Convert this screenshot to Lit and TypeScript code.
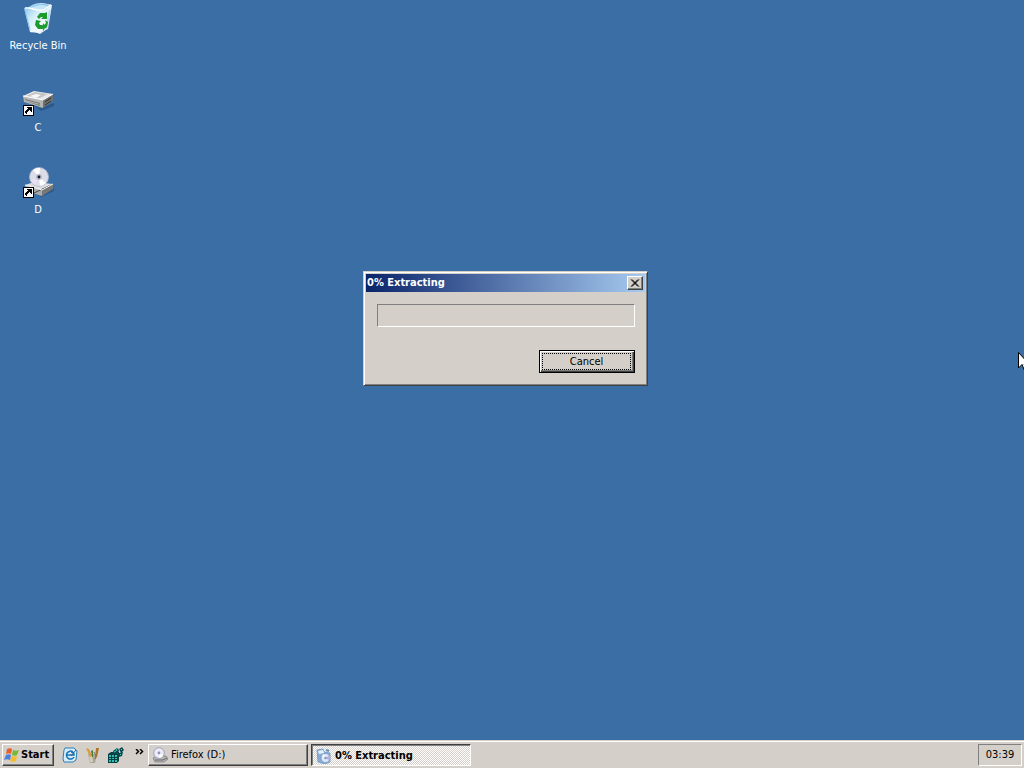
import { LitElement, html, css, svg } from "lit";
import { customElement, property } from "lit/decorators.js";

const shortcutArrow = svg`
  <g shape-rendering="crispEdges">
    <rect x="1" y="21" width="11" height="11" fill="#000"/>
    <rect x="2" y="22" width="9" height="9" fill="#fff"/>
    <path d="M5 23h5v5H9v-1H8v-1H7v1H6v1H5v2H4v-1H3v-2h1v-1h1v-1h1v-1H5z" fill="#000"/>
  </g>`;

const recycleBin = html`
  <svg width="32" height="32" viewBox="0 0 32 32" aria-hidden="true">
    <defs>
      <linearGradient id="bin" x1="0" y1="0" x2="1" y2="1">
        <stop offset="0" stop-color="#7cc0ea"/><stop offset=".4" stop-color="#d5effb"/>
        <stop offset=".7" stop-color="#f6fbfe"/><stop offset="1" stop-color="#a9cfea"/>
      </linearGradient>
    </defs>
    <path d="M2 6c6 0 8-5 17-5 4 0 7 1 11 2l-4 24c-3 1-5 3-8 5-3-2-7-1-10-2z" fill="url(#bin)"/>
    <path d="M4 6c6 0 8-4 15-4 4 0 7 0 10 1-3 2-4 5-9 5-6 0-9-3-16-2z" fill="#8cc6ea"/>
    <path d="M7 6c5-1 8-3 13-3l6 1c-3 3-9 4-12 3z" fill="#c3e6f8"/>
    <path d="M3 6c6-1 10 3 16 2 5 0 7-4 10-5" fill="none" stroke="#fff" stroke-width="1.500"/>
    <path d="M3 8l5 20" fill="none" stroke="#8cc3e6"/>
    <path d="M28 8l-4 19" fill="none" stroke="#b6daf0" stroke-width="2"/>
    <path d="M15 15l3-4h5l2-1v7h-6l2-2h-2l-2 2zM14 18l5 1-2 2 1 2h2v4h-4l-3-4zM23 18l3 2-1 5-3 2v2l-3-4 3-4v2l2-2z" fill="#1c9a2c"/>
  </svg>`;

const hardDrive = html`
  <svg width="32" height="32" viewBox="0 0 32 32" aria-hidden="true">
    <path d="M5 16l13 8 14-5v3l-13 5z" fill="#234b78" opacity=".6"/>
    <path d="M1 12L12 7l19 3-10 6z" fill="#e9e9e9"/>
    <path d="M4 12l9-4 13 2-8 4z" fill="#c4c6c6"/>
    <path d="M8 12l6-2 5 1-5 3z" fill="#f8f8f8"/>
    <path d="M1 12l20 4v8L2 18z" fill="#b4b4b4"/>
    <path d="M21 16l10-6v7l-10 7z" fill="#6f6f6f"/>
    <path d="M3 15l15 4v1L3 16zM3 17l15 4v1" fill="#777"/>
    <path d="M1 12l20 4 10-6" fill="none" stroke="#fff"/>
    <path d="M23 18l6-4M23 21l6-4" stroke="#333"/>
    <path d="M16 20h2" stroke="#4a4"/>
    ${shortcutArrow}
  </svg>`;

const discDrive = html`
  <svg width="32" height="32" viewBox="0 0 32 32" aria-hidden="true">
    <path d="M8 25l10 5 14-8v3l-13 6z" fill="#234b78" opacity=".6"/>
    <path d="M3 19l9-3 19 2-11 6z" fill="#dedede"/>
    <path d="M3 19l17 5v6L4 25z" fill="#aaa"/>
    <path d="M20 24l11-6v5l-11 7z" fill="#777"/>
    <path d="M12 27l17-8" stroke="#444"/>
    <path d="M3 19l17 5 11-6" fill="none" stroke="#f6f6f6"/>
    <circle cx="17" cy="11" r="9.500" fill="#dcdde8" stroke="#aeb6cc" stroke-width=".8"/>
    <path d="M17 11L11 4a9 9 0 0 1 7-2z" fill="#fff"/>
    <path d="M17 11l7 6a9 9 0 0 1-6 3z" fill="#fff"/>
    <path d="M17 11l-8 3a9 9 0 0 0 4 5z" fill="#e9dff2"/>
    <circle cx="17" cy="11" r="3" fill="#b9bac8"/>
    <circle cx="17" cy="11" r="1.400" fill="#151b2c"/>
    ${shortcutArrow}
  </svg>`;

const flag = html`
  <svg width="16" height="16" viewBox="0 0 16 16" aria-hidden="true">
    <path d="M3 2c2-1 4-1 5 0L7 7C5 6 4 6 2 7z" fill="#e8602c"/>
    <path d="M9 3c2 1 4 1 6 0l-2 5c-2 1-3 1-5 0z" fill="#78b833"/>
    <path d="M2 8c2-1 3-1 5 0l-1 5c-2-1-4-1-6 0z" fill="#4b80dc"/>
    <path d="M8 9c2 1 3 1 5 0l-1 5c-2 1-4 1-6 0z" fill="#f5bd27"/>
  </svg>`;

const desktopGlyph = html`
  <svg width="16" height="16" viewBox="0 0 16 16" aria-hidden="true">
    <path d="M3 1h9l3 3-1 9-3 2H2l-1-3 1-9z" fill="#d6edf8" stroke="#2c7fb6"/>
    <path d="M11 5a4 4 0 1 0 1 5M5 8h7c0-2-1-3-3-3" fill="none" stroke="#1673b5" stroke-width="1.500"/>
    <path d="M9 9l5-6" stroke="#3b5f80"/>
  </svg>`;

const toolsGlyph = html`
  <svg width="16" height="16" viewBox="0 0 16 16" aria-hidden="true">
    <path d="M3 7h9l-2 9H5z" fill="#a9a795"/>
    <path d="M4 8h3l1 7H5z" fill="#d3cfba"/>
    <path d="M1 1l3 1 3 7-2 1z" fill="#d89c3c"/>
    <path d="M6 4l2-1v7H7z" fill="#507d43"/>
    <path d="M11 1h3l-2 9-2 2z" fill="#b07627"/>
    <path d="M9 5l2 4-1 3" fill="none" stroke="#77786d"/>
  </svg>`;

const registryGlyph = html`
  <svg width="16" height="16" viewBox="0 0 16 16" aria-hidden="true">
    <path d="M0 7l3-2h8v9l-2 2H0z" fill="#073f43"/>
    <path d="M1 8h2v2H1zM4 8h2v2H4zM7 8h2v2H7zM1 11h2v1H1zM4 11h2v1H4zM7 11h2v1H7zM1 13h2v2H1zM4 13h2v2H4zM7 13h2v2H7z" fill="#2fc0b4"/>
    <path d="M5 4l4-3 2 2-1 4-4 0zM11 2l3-2 2 3-3 3zM11 6l4-1-1 4-3 1z" fill="#064a4f"/>
    <path d="M8 2l1 2M13 2l1 1M12 7l1 1M6 5l2-1" stroke="#3bd3c4"/>
  </svg>`;

const discGlyph = html`
  <svg width="16" height="16" viewBox="0 0 16 16" aria-hidden="true">
    <path d="M1 11l4-2h9l2 3-4 3H3z" fill="#b5b5b5" stroke="#777" stroke-width=".7"/>
    <path d="M3 13h8l4-2" fill="none" stroke="#666"/>
    <circle cx="7" cy="6" r="5.300" fill="#ececf8" stroke="#9292b5" stroke-width=".8"/>
    <path d="M7 6l4 3a5 5 0 0 1-4 2z" fill="#fff"/>
    <circle cx="7" cy="6" r="1.400" fill="#8f90b0"/>
  </svg>`;

const setupGlyph = html`
  <svg width="16" height="16" viewBox="0 0 16 16" aria-hidden="true">
    <path d="M1 2l6-1 1 3 6 1v9l-5 2-7-2z" fill="#86aed4" stroke="#6f98c4" stroke-width=".8"/>
    <path d="M2 3l5-1 1 3-5 1z" fill="#e4f1fa"/>
    <path d="M10 2l3 1" stroke="#6390bd" stroke-width="2"/>
    <circle cx="9.500" cy="10" r="4.500" fill="#dfe9f7" stroke="#7395c3" stroke-width=".8"/>
    <path d="M9 10l4-2v4z" fill="#b9a9e4"/>
    <path d="M9 10l-3-2 2-2z" fill="#fff"/>
    <circle cx="9.500" cy="10" r="1.200" fill="#7f95c8"/>
  </svg>`;

@customElement("desktop-icon")
class DesktopIcon extends LitElement {
  @property() label = "";
  @property({ attribute: false }) art: unknown;

  static styles = css`
    :host { display: block; }
    .item {
      display: flex; flex-direction: column; align-items: center; gap: 5px;
      width: 100%; padding: 0; border: 0; background: none; color: #fff;
      font: 11px/14px "DejaVu Sans Condensed", "DejaVu Sans", sans-serif;
    }
    svg { display: block; }
  `;

  render() {
    return html`<button class="item" type="button">${this.art}<span>${this.label}</span></button>`;
  }
}

@customElement("progress-dialog")
class ProgressDialog extends LitElement {
  @property() heading = "";
  @property({ type: Number }) percent = 0;

  static styles = css`
    :host {
      display: block; box-sizing: border-box; padding: 1px;
      background: #d5cfc9; border: 1px solid; border-color: #d5cfc9 #404040 #404040 #d5cfc9;
      box-shadow: inset 1px 1px #fff, inset -1px -1px #808080;
      font: 11px/14px "DejaVu Sans Condensed", "DejaVu Sans", sans-serif;
    }
    .title {
      display: flex; align-items: center; justify-content: space-between;
      height: 18px; margin: 1px; padding: 0 2px 0 1px;
      background: linear-gradient(90deg, #0a246a, #a6caf0); color: #fff;
    }
    h1 { margin: 0; font-size: 11px; line-height: 14px; font-weight: bold; }
    .close {
      display: grid; place-items: center; width: 16px; height: 14px; padding: 0;
      background: #d5cfc9; border: 1px solid; border-color: #fff #404040 #404040 #fff;
      box-shadow: inset -1px -1px #808080;
    }
    .body { display: flex; flex-direction: column; align-items: flex-end; gap: 23px; padding: 11px 11px 11px 12px; }
    .track {
      box-sizing: border-box; width: 100%; height: 23px;
      border: 1px solid; border-color: #808080 #fff #fff #808080;
    }
    .fill { height: 100%; background: #0a246a; }
    .cancel {
      width: 96px; height: 23px; padding: 2px; background: #d5cfc9; color: #000; font: inherit;
      border: 1px solid #000; box-shadow: inset 1px 1px #fff, inset -1px -1px #404040, inset -2px -2px #808080;
    }
    .focus { display: block; box-sizing: border-box; height: 17px; margin-right: 1px; line-height: 15px; border: 1px dotted #000; }
  `;

  render() {
    return html`
      <div class="title">
        <h1>${this.heading}</h1>
        <button class="close" type="button" aria-label="Close">
          <svg width="10" height="8" viewBox="0 0 10 8"><path d="M1 .5l7 7M2 .5l7 7M8 .5l-7 7M9 .5l-7 7" stroke="#000"/></svg>
        </button>
      </div>
      <div class="body">
        <div class="track" role="progressbar" aria-label="Extracting" aria-valuenow=${this.percent}>
          <div class="fill" style="width:${this.percent}%"></div>
        </div>
        <button class="cancel" type="button"><span class="focus">Cancel</span></button>
      </div>`;
  }
}

@customElement("task-bar")
class TaskBar extends LitElement {
  static styles = css`
    :host {
      display: flex; align-items: center; box-sizing: border-box; height: 28px; padding: 3px 2px 2px;
      background: #d5cfc9; border-top: 1px solid #d5cfc9; box-shadow: inset 0 1px #fff;
      font: 11px/14px "DejaVu Sans Condensed", "DejaVu Sans", sans-serif;
    }
    button { box-sizing: border-box; padding: 0; background: none; border: 0; color: #000; font: inherit; }
    svg { display: block; flex: none; }
    .raised, .task {
      display: flex; align-items: center; height: 22px; background: #d5cfc9;
      border: 1px solid; border-color: #fff #404040 #404040 #fff; box-shadow: inset -1px -1px #808080;
    }
    .start { gap: 1px; width: 52px; padding: 0 1px; font-weight: bold; }
    .quick { display: flex; align-items: center; gap: 7px; margin-left: 8px; }
    .more { align-self: flex-start; margin: 5px 4px 0 11px; }
    .tasks { display: flex; flex: 1; gap: 3px; }
    .task { gap: 3px; width: 160px; padding: 0 3px; }
    .active {
      font-weight: bold; padding: 2px 3px 0 4px;
      border-color: #404040 #fff #fff #404040; box-shadow: inset 1px 1px #808080;
      background: repeating-conic-gradient(#fff 0 25%, #d5cfc9 0 50%) 0 0 / 2px 2px;
    }
    .clock {
      box-sizing: border-box; width: 44px; height: 22px; line-height: 20px; text-align: center;
      border: 1px solid; border-color: #808080 #fff #fff #808080;
    }
  `;

  render() {
    return html`
      <button class="raised start" type="button">${flag}<span>Start</span></button>
      <div class="quick">
        <button type="button" aria-label="Browser">${desktopGlyph}</button>
        <button type="button" aria-label="Tools">${toolsGlyph}</button>
        <button type="button" aria-label="Registry">${registryGlyph}</button>
      </div>
      <button class="more" type="button" aria-label="More">
        <svg width="9" height="6" viewBox="0 0 9 6"><path d="M1 0l2.500 2.500L1 5M5 0l2.500 2.500L5 5" fill="none" stroke="#000" stroke-width="1.500"/></svg>
      </button>
      <div class="tasks">
        <button class="task" type="button">${discGlyph}<span>Firefox (D:)</span></button>
        <button class="task active" type="button">${setupGlyph}<span>0% Extracting</span></button>
      </div>
      <time class="clock">03:39</time>`;
  }
}

@customElement("app-root")
class AppRoot extends LitElement {
  static styles = css`
    :host { display: flex; flex-direction: column; height: 100vh; overflow: hidden; background: #3a6ea5; }
    .desktop { position: relative; flex: 1; overflow: hidden; }
    .icons { display: flex; flex-direction: column; gap: 31px; width: 76px; padding-top: 2px; }
    .window { position: absolute; left: 363px; top: 271px; width: 285px; }
    .pointer { position: absolute; left: 1018px; top: 352px; }
  `;

  render() {
    return html`
      <main class="desktop">
        <div class="icons">
          <desktop-icon label="Recycle Bin" .art=${recycleBin}></desktop-icon>
          <desktop-icon label="C" .art=${hardDrive}></desktop-icon>
          <desktop-icon label="D" .art=${discDrive}></desktop-icon>
        </div>
        <progress-dialog class="window" heading="0% Extracting" percent="0"></progress-dialog>
        <svg class="pointer" width="12" height="20" viewBox="0 0 12 20" aria-hidden="true">
          <path d="M.5.5v15.500l3.500-3.500 2.500 6 2-1-2.500-5.500h5z" fill="#fff" stroke="#000"/>
        </svg>
      </main>
      <task-bar></task-bar>`;
  }
}
